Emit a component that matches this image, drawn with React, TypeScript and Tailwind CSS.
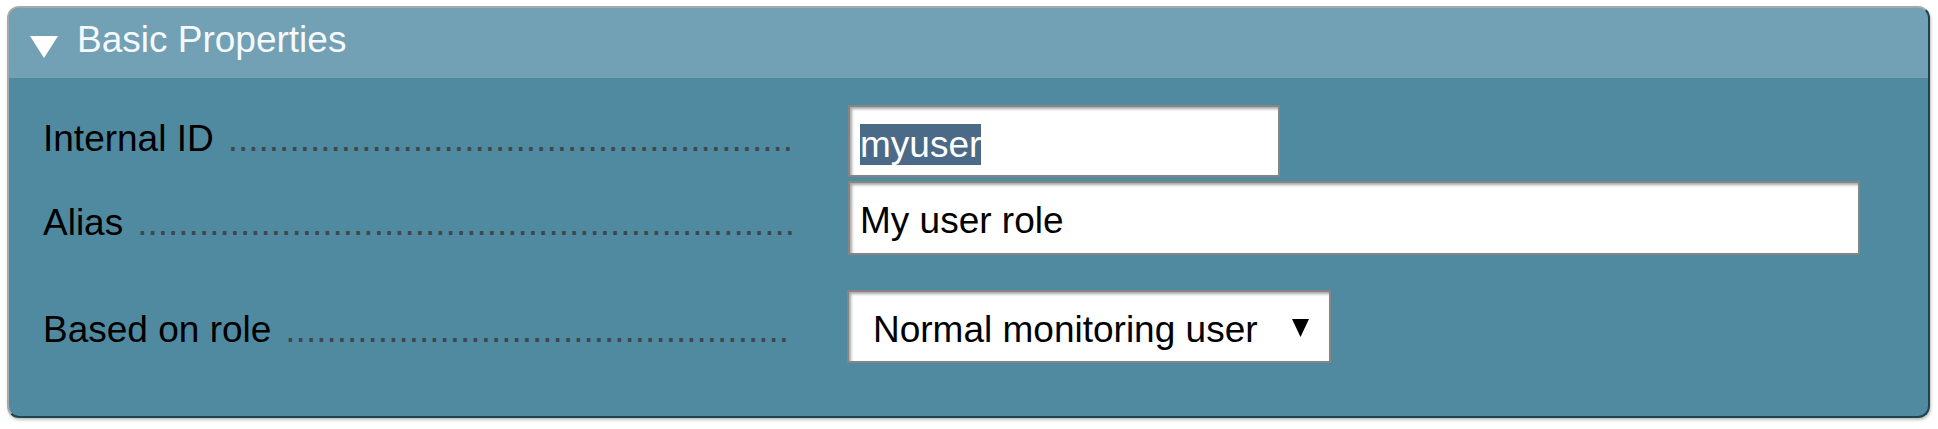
import React from "react";

const font = { fontFamily: '"Liberation Sans", Arial, Helvetica, sans-serif' };

function Dots({ n }: { n: number }) {
  return (
    <span className="ml-[14px] min-w-0 flex-1 overflow-hidden whitespace-nowrap text-[#3f474b]">
      {".".repeat(n)}
    </span>
  );
}

function Label({ text, pt, n }: { text: string; pt: string; n: number }) {
  return (
    <div className={`flex w-[805px] shrink-0 pr-[40px] text-[37px] leading-[42px] text-black ${pt}`}>
      <span className="whitespace-nowrap">{text}</span>
      <Dots n={n} />
    </div>
  );
}

const field =
  "bg-white border-2 border-[#858585] shadow-[inset_2px_2px_3px_rgba(0,0,0,0.35)] text-[37px] leading-[41px] text-black";

export default function App() {
  return (
    <div className="w-[1938px] h-[429px] bg-white pt-[6px] pl-[7px]" style={font}>
      <div className="w-[1923px] h-[412px] rounded-[12px] overflow-hidden border-2 border-t-[#a4aaac] border-l-[#a4aaac] border-r-[#1e4450] border-b-[#1e4450] shadow-[1px_2px_3px_rgba(0,0,0,0.25)] bg-[#4f8aa0] flex flex-col">
        <div className="h-[70px] bg-[#72a0b4] flex items-start pl-[21px]">
          <svg width="28" height="22" viewBox="0 0 28 22" className="mt-[28px]">
            <polygon points="0,0 28,0 14,22" fill="#ffffff" />
          </svg>
          <span className="ml-[19px] mt-[11px] text-[37px] leading-[42px] text-[#f5f9fb] whitespace-nowrap">
            Basic Properties
          </span>
        </div>
        <div className="flex-1 flex flex-col pl-[34px] pt-[27px]">
          <div className="flex items-start">
            <Label text="Internal ID" pt="pt-[13px]" n={55} />
            <div className={`${field} w-[432px] h-[72px] pl-[10px] pt-[17px]`}>
              <span className="bg-[#4b6a87] text-white">myuser</span>
            </div>
          </div>
          <div className="flex items-start mt-[4px]">
            <Label text="Alias" pt="pt-[21px]" n={64} />
            <div className={`${field} w-[1012px] h-[74px] pl-[10px] pt-[17px]`}>
              <span>My user role</span>
            </div>
          </div>
          <div className="flex items-start mt-[35px]">
            <Label text="Based on role" pt="pt-[19px]" n={49} />
            <div className={`${field} -ml-px w-[484px] h-[73px] pl-[24px] pt-[17px] flex items-start`}>
              <span className="whitespace-nowrap">Normal monitoring user</span>
              <svg width="17" height="18" viewBox="0 0 17 18" className="ml-[34px] mt-[10px]">
                <polygon points="0,0 17,0 8.5,18" fill="#000000" />
              </svg>
            </div>
          </div>
        </div>
      </div>
    </div>
  );
}
